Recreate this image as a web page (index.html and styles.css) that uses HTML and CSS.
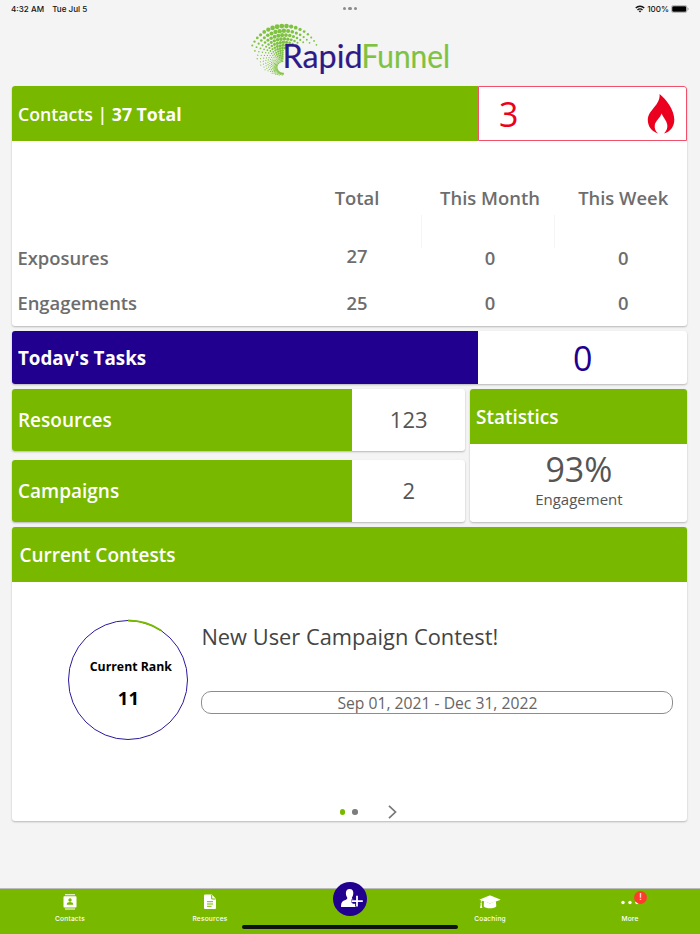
FILE: index.html
```html
<!DOCTYPE html>
<html lang="en">
<head>
    <meta charset="UTF-8">
    <meta name="viewport" content="width=device-width, initial-scale=1.0">
    <title>RapidFunnel</title>
    <link rel="stylesheet" href="styles.css">
</head>
<body>
    <div class="status-bar">
        <div class="status-time"><span>4:32 AM</span><span>Tue Jul 5</span></div>
        <div class="status-dots"><i></i><i></i><i></i></div>
        <div class="status-right">
            <svg width="10" height="8" viewBox="0 0 20 15" fill="none" stroke="#111" stroke-width="2.8">
                <path d="M1.5 5.5a12 12 0 0 1 17 0"/>
                <path d="M5 9.3a7 7 0 0 1 10 0"/>
                <path d="M7.3 11.5a4 4 0 0 1 5.4 0L10 14.5z" fill="#111" stroke="none"/>
            </svg>
            <span>100%</span>
            <svg class="battery" width="18" height="8" viewBox="0 0 18 8">
                <rect x=".4" y=".4" width="15.6" height="7.2" rx="2.2" fill="#f4f4f4" stroke="#999" stroke-width=".7"/>
                <rect x="1.2" y="1.2" width="14" height="5.6" rx="1.3" fill="#000"/>
                <path d="M16.7 2.8q1 .3 1 1.2t-1 1.2z" fill="#999"/>
            </svg>
        </div>
    </div>

    <header class="logo">
        <svg width="204" height="64" viewBox="0 0 204 64">
            <g id="swirl" fill="#7fc241"></g>
            <text class="logo-text navy" x="34.5" y="48.5" textLength="80" lengthAdjust="spacingAndGlyphs">Rapid</text>
            <text class="logo-text green" x="113.5" y="48.5" textLength="88.5" lengthAdjust="spacingAndGlyphs">Funnel</text>
        </svg>
    </header>

    <main class="dashboard">
        <section class="card contacts">
            <div class="contacts-top">
                <div class="card-title">Contacts |&nbsp;<b>37 Total</b></div>
                <div class="hot-leads">
                    <span>3</span>
                    <svg width="28" height="40" viewBox="0 0 28 40">
                        <path d="M12.6 0C19 5 27.3 16 27.3 25.5C27.3 33 23 38 17 39.4C19.5 37 20.7 34 20.3 31C19.8 26.5 16 23.5 14.7 19.5C13 24 8.5 27 7.8 31C7.3 34.5 8.5 37.5 11 39.4C4.5 37.5 .8 32 .8 26C.8 16 13.5 11.5 12.6 0z" fill="#ec0020"/>
                    </svg>
                </div>
            </div>
            <div class="contacts-table">
                <div class="row row-head"><span></span><span>Total</span><span>This Month</span><span>This Week</span></div>
                <div class="row row-divider"><span></span><span></span><span></span><span></span></div>
                <div class="row row-exposures"><span>Exposures</span><span class="raised">27</span><span>0</span><span>0</span></div>
                <div class="row"><span>Engagements</span><span>25</span><span>0</span><span>0</span></div>
            </div>
        </section>

        <section class="card tasks">
            <div class="card-title"><span class="clip">Today's Tasks</span></div>
            <div class="count">0</div>
        </section>

        <div class="summary">
            <div class="summary-left">
                <section class="card tile">
                    <div class="card-title">Resources</div>
                    <div class="count">123</div>
                </section>
                <section class="card tile">
                    <div class="card-title">Campaigns</div>
                    <div class="count">2</div>
                </section>
            </div>
            <section class="card stats">
                <div class="card-title">Statistics</div>
                <div class="percent">93%</div>
                <div class="caption">Engagement</div>
            </section>
        </div>

        <section class="card contests">
            <div class="card-title">Current Contests</div>
            <div class="contest">
                <div class="rank">
                    <svg class="ring" width="122" height="122" viewBox="0 0 122 122" fill="none">
                        <circle cx="61" cy="61" r="59.5" stroke="#2b1a9c" stroke-width="1"/>
                        <path d="M61 1.5A59.5 59.5 0 0 1 94 11.5" stroke="#78b900" stroke-width="2"/>
                    </svg>
                    <div class="rank-label">Current Rank</div>
                    <div class="rank-value">11</div>
                </div>
                <div class="contest-info">
                    <h2>New User Campaign Contest!</h2>
                    <div class="dates">Sep 01, 2021 - Dec 31, 2022</div>
                </div>
            </div>
            <div class="pager">
                <i class="dot active"></i><i class="dot"></i>
                <svg width="9" height="14" viewBox="0 0 9 14" fill="none" stroke="#777" stroke-width="1.7"><path d="M1 .8L7.5 7L1 13.2"/></svg>
            </div>
        </section>
    </main>

    <nav class="tab-bar">
        <a class="tab">
            <svg width="14" height="16" viewBox="0 0 14 16" fill="#fff">
                <path d="M2 .2h10v1H2zM2 14.5h10v1H2z"/>
                <path fill-rule="evenodd" d="M1.3 2.2h11.4q.8 0 .8.8v9.800q0 .8-.8.8H1.3q-.8 0-.8-.8V3q0-.8.8-.8zM7 4.3a1.7 1.7 0 1 0 .01 0zM3.8 10.8h6.4V10c0-1.2-2-1.9-3.2-1.9S3.8 8.8 3.8 10z"/>
            </svg>
            <span>Contacts</span>
        </a>
        <a class="tab">
            <svg width="14" height="16" viewBox="0 0 14 16">
                <path d="M2 .5h6.800L13 4.8V14q0 1-1 1H2q-1 0-1-1V1.5q0-1 1-1z" fill="#fff"/>
                <path d="M8.7 1v4h4M4 7.7h6M4 10h6M4 12.3h4.5" fill="none" stroke="#78b900"/>
            </svg>
            <span>Resources</span>
        </a>
        <a class="tab tab-add">
            <svg width="34" height="34" viewBox="0 0 34 34">
                <circle cx="17" cy="17" r="17" fill="#21008f"/>
                <path d="M16.6 7c2.7 0 4 2 3.7 4.7c-.2 2-1 3-1.5 4.2c.4 1.3 1.9 1.7 3.4 2.3h-2.7v3.5h3.3V25H8c0-3.5.5-5.2 2.5-6.2c1.9-.9 3.500-1.2 3.900-2.9c-.7-1.2-1.4-2.5-1.5-4.2C12.7 9 14 7 16.6 7z" fill="#fff"/>
                <path d="M24 13.5v11M18.5 19h11.3" stroke="#21008f" stroke-width="3.6"/>
                <path d="M24 13.8v10.7M18.8 19.1h11" stroke="#fff" stroke-width="1.8"/>
            </svg>
        </a>
        <a class="tab">
            <svg width="22" height="16" viewBox="0 0 22 16" fill="#fff">
                <path d="M.7 5.4L10.5 1.5Q11 1.3 11.5 1.5L21.3 5.4Q21.6 5.7 21.2 6L11.5 9.2Q11 9.4 10.5 9.2L3.2 6.8C2.3 7.5 2.5 8 2.5 8.9Q3.3 9.6 2.7 10.4L3.3 14H1L1.7 10.4Q1 9.6 1.8 8.9C1.7 7.9 1.8 7.3 2.2 6.5L.8 6Q.4 5.7.7 5.4z"/>
                <path d="M5 7l6 2.5 5.9-2.5.4 5.3C15.5 15 6.5 15 4.7 12.3z"/>
            </svg>
            <span>Coaching</span>
        </a>
        <a class="tab">
            <svg width="18" height="16" viewBox="0 0 18 16" fill="#fff">
                <circle cx="2" cy="8.5" r="1.7"/><circle cx="9" cy="8.5" r="1.7"/><circle cx="16" cy="8.5" r="1.7"/>
            </svg>
            <b class="badge">!</b>
            <span>More</span>
        </a>
        <div class="home-indicator"></div>
    </nav>

    <script>
        // Dotted swirl: arcs that shrink towards the letter R
        const swirl = document.getElementById('swirl');
        for (let i = 0; i < 14; i++) {
            const rx = 35.5 * Math.pow(0.875, i);
            const ry = 33.5 * Math.pow(0.875, i);
            const start = Math.min(26 + i * 10, 95);
            const end = Math.min(157 + i * 12, 275);
            const step = 7.6 + i * 0.25;
            for (let a = start; a <= end; a += step) {
                const rad = a * Math.PI / 180;
                const size = (0.75 + 1.7 * Math.exp(-Math.pow((a - 98) / 42, 2))) * Math.pow(0.91, i);
                const dot = document.createElementNS('http://www.w3.org/2000/svg', 'circle');
                dot.setAttribute('cx', 36.5 - i * 0.1 + rx * Math.cos(rad));
                dot.setAttribute('cy', 40.5 + i * 0.6 - ry * Math.sin(rad));
                dot.setAttribute('r', Math.max(size, 0.6));
                swirl.appendChild(dot);
            }
        }
    </script>
</body>
</html>
```
FILE: styles.css
```css
:root {
    --green: #78b900;
    --navy: #21008f;
    --red: #ec0020;
    --gray: #6d6d6d;
}

* {
    margin: 0;
    padding: 0;
    box-sizing: border-box;
}

body {
    height: 934px;
    display: flex;
    flex-direction: column;
    background: #f4f4f4;
    font-family: 'Open Sans', sans-serif;
    overflow: hidden;
}

.status-bar {
    display: grid;
    grid-template-columns: 1fr auto 1fr;
    align-items: center;
    height: 17px;
    padding: 0 11px;
    font: 500 8.1px Inter, sans-serif;
    color: #111;
}

.status-time {
    display: flex;
    gap: 8px;
}

.status-dots {
    display: flex;
    gap: 2px;
}

.status-dots i {
    width: 3.5px;
    height: 3.5px;
    border-radius: 50%;
    background: #8b8b8b;
}

.status-right {
    display: flex;
    justify-content: flex-end;
    align-items: center;
    gap: 2px;
}

.logo {
    height: 69px;
    display: flex;
    justify-content: center;
    padding-top: 2px;
}

.logo svg {
    overflow: visible;
}

.logo-text {
    font-family: Lato, sans-serif;
    font-size: 32px;
    stroke-width: 0.2px;
}

.navy {
    fill: #2e1a87;
    stroke: #2e1a87;
}

.green {
    fill: #7fc241;
    stroke: #7fc241;
}

.dashboard {
    display: flex;
    flex-direction: column;
    gap: 5px;
    padding: 0 12.6px 0 12.4px;
}

.card {
    background: #fff;
    border-radius: 3px;
    box-shadow: 0 1px 2px rgba(0,0,0,0.25);
    overflow: hidden;
}

.card-title {
    display: flex;
    align-items: center;
    padding: 0 0 0 5.6px;
    background: var(--green);
    color: #fff;
    font-size: 19px;
    font-weight: 600;
}

.contacts {
    height: 240px;
}

.contacts-top {
    display: grid;
    grid-template-columns: 465.6px 1fr;
    height: 55px;
}

.contacts .card-title {
    font-size: 17.7px;
}

.contacts b {
    font-weight: 700;
}

.hot-leads {
    display: flex;
    align-items: center;
    justify-content: space-between;
    padding: 0 11px 0 20px;
    border: 1px solid #f0506a;
    border-radius: 0 3px 0 0;
    color: var(--red);
    font-size: 34px;
}

.contacts-table {
    padding-top: 40px;
    color: var(--gray);
    font-size: 18.4px;
    font-weight: 600;
    line-height: 20px;
}

.row {
    display: grid;
    grid-template-columns: 280.6px 128px 133px 133.4px;
    align-items: center;
    height: 45px;
    text-align: center;
}

.row span:first-child {
    padding-left: 5px;
    text-align: left;
}

.row span:nth-child(n+3) {
    padding-left: 5px;
}

.row-head {
    height: 34px;
}

.row-divider {
    height: 33px;
}

.row-divider span {
    height: 100%;
}

.row-divider span:nth-child(n+3) {
    border-left: 1px solid #f5f5f5;
}

.row-exposures {
    height: 20px;
    margin-bottom: 12px;
}

.row-exposures .raised {
    margin-top: -4px;
}

.tasks {
    display: grid;
    grid-template-columns: 465.6px 1fr;
    height: 53px;
}

.tasks .card-title {
    padding-bottom: 2px;
    background: var(--navy);
    font-size: 18.8px;
    font-weight: 700;
}

/* single line box that cuts the descenders */
.clip {
    height: 19px;
    line-height: 23px;
    overflow: hidden;
}

.count {
    display: flex;
    align-items: center;
    justify-content: center;
}

.tasks .count {
    color: var(--navy);
    font-size: 34px;
}

.summary {
    display: grid;
    grid-template-columns: 453px 217px;
    gap: 5px;
    height: 133px;
}

.summary-left {
    display: grid;
    grid-template-rows: 62px 62px;
    gap: 9px;
}

.tile {
    display: grid;
    grid-template-columns: 339.6px 1fr;
}

.tile .count {
    padding-bottom: 2px;
    color: #555;
    font-size: 22px;
}

.stats {
    text-align: center;
    color: #555;
}

.stats .card-title {
    height: 55px;
}

.percent {
    margin-top: 3px;
    font-size: 34px;
    line-height: 44px;
}

.caption {
    font-size: 15px;
    line-height: 16px;
}

.contests {
    display: flex;
    flex-direction: column;
    height: 294px;
}

.contests .card-title {
    height: 55px;
    padding-left: 7px;
}

.contest {
    display: flex;
    gap: 12px;
    padding: 37px 14px 0 55px;
}

.rank {
    position: relative;
    width: 122px;
    height: 122px;
    padding-top: 38px;
    text-align: center;
    color: #000;
    font-weight: 700;
}

.ring {
    position: absolute;
    left: 0;
    top: 0;
}

.rank-label {
    padding-left: 5px;
    font-size: 12.3px;
    line-height: 20px;
    white-space: nowrap;
}

.rank-value {
    margin-top: 9px;
    font-size: 18.5px;
    line-height: 24px;
}

.contest-info {
    flex: 1;
    padding-top: 2px;
}

.contest-info h2 {
    color: #444;
    font-size: 21.85px;
    font-weight: 400;
    line-height: 32px;
}

.dates {
    height: 23px;
    margin-top: 38px;
    border: 1px solid #8d8d8d;
    border-radius: 10px;
    color: #666;
    font-size: 15.7px;
    line-height: 22px;
    text-align: center;
}

.pager {
    display: flex;
    align-items: center;
    gap: 7px;
    margin: auto 0 2px 327.6px;
}

.dot {
    width: 5.5px;
    height: 5.5px;
    border-radius: 50%;
    background: #7d7d7d;
}

.dot.active {
    background: var(--green);
}

.pager svg {
    margin-left: 23px;
}

.tab-bar {
    position: relative;
    display: grid;
    grid-template-columns: repeat(5, 1fr);
    height: 45px;
    margin-top: auto;
    background: var(--green);
    box-shadow: 0 -1px 0 #bbb;
}

.tab {
    position: relative;
    display: flex;
    flex-direction: column;
    align-items: center;
    padding-top: 5px;
    color: #fff;
    font: 500 6.6px Inter, sans-serif;
}

.tab span {
    margin-top: 5px;
    line-height: 8px;
    letter-spacing: 0.2px;
}

.tab-add {
    padding: 0;
    margin-top: -7px;
}

.badge {
    position: absolute;
    left: 74px;
    top: 2px;
    width: 13px;
    height: 13px;
    border-radius: 50%;
    background: #ff3b30;
    font-weight: 500;
    font-size: 8.5px;
    line-height: 13px;
    text-align: center;
}

.home-indicator {
    position: absolute;
    left: 242px;
    bottom: 5px;
    width: 216px;
    height: 4px;
    border-radius: 2px;
    background: #111;
}
```
